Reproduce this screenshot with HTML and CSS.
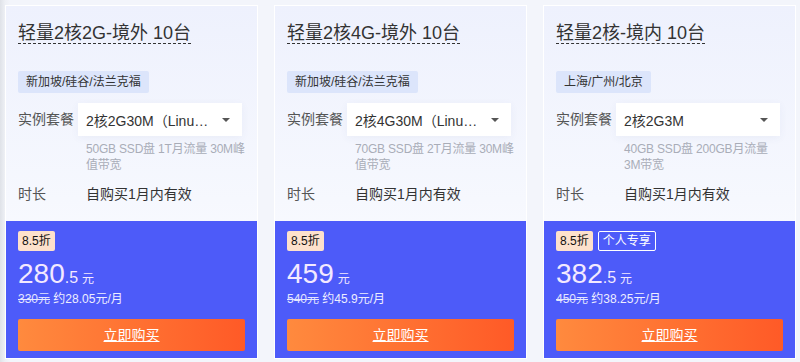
FILE: index.html
```html
<!DOCTYPE html>
<html lang="zh-CN">
<head>
<meta charset="utf-8">
<link rel="stylesheet" href="styles.css">
</head>
<body>
<div class="page">
  <div class="card">
    <div class="top">
      <h3 class="title"><span>轻量2核2G-境外 10台</span></h3>
      <div class="tags"><span class="tag">新加坡/硅谷/法兰克福</span></div>
      <div class="row">
        <span class="label">实例套餐</span>
        <div class="field">
          <div class="select"><span class="val">2核2G30M（Linux）</span><i class="arrow"></i></div>
          <p class="desc">50GB SSD盘 1T月流量 30M峰<br>值带宽</p>
        </div>
      </div>
      <div class="row dur">
        <span class="label">时长</span>
        <span class="value">自购买1月内有效</span>
      </div>
    </div>
    <div class="bottom">
      <div class="badges"><span class="disc">8.5折</span></div>
      <div class="price"><span class="int">280</span><span class="dec">.5</span><span class="unit">元</span></div>
      <div class="orig"><s>330元</s> 约28.05元/月</div>
      <a class="buy" href="#">立即购买</a>
    </div>
  </div>

  <div class="card">
    <div class="top">
      <h3 class="title"><span>轻量2核4G-境外 10台</span></h3>
      <div class="tags"><span class="tag">新加坡/硅谷/法兰克福</span></div>
      <div class="row">
        <span class="label">实例套餐</span>
        <div class="field">
          <div class="select"><span class="val">2核4G30M（Linux）</span><i class="arrow"></i></div>
          <p class="desc">70GB SSD盘 2T月流量 30M峰<br>值带宽</p>
        </div>
      </div>
      <div class="row dur">
        <span class="label">时长</span>
        <span class="value">自购买1月内有效</span>
      </div>
    </div>
    <div class="bottom">
      <div class="badges"><span class="disc">8.5折</span></div>
      <div class="price"><span class="int">459</span><span class="unit">元</span></div>
      <div class="orig"><s>540元</s> 约45.9元/月</div>
      <a class="buy" href="#">立即购买</a>
    </div>
  </div>

  <div class="card">
    <div class="top">
      <h3 class="title"><span>轻量2核-境内 10台</span></h3>
      <div class="tags"><span class="tag">上海/广州/北京</span></div>
      <div class="row">
        <span class="label">实例套餐</span>
        <div class="field">
          <div class="select"><span class="val">2核2G3M</span><i class="arrow"></i></div>
          <p class="desc">40GB SSD盘 200GB月流量<br>3M带宽</p>
        </div>
      </div>
      <div class="row dur">
        <span class="label">时长</span>
        <span class="value">自购买1月内有效</span>
      </div>
    </div>
    <div class="bottom">
      <div class="badges"><span class="disc">8.5折</span><span class="excl">个人专享</span></div>
      <div class="price"><span class="int">382</span><span class="dec">.5</span><span class="unit">元</span></div>
      <div class="orig"><s>450元</s> 约38.25元/月</div>
      <a class="buy" href="#">立即购买</a>
    </div>
  </div>
</div>
</body>
</html>
```

FILE: styles.css
```css
* { box-sizing: border-box; }
html, body { margin: 0; padding: 0; }
body {
  width: 800px;
  height: 362px;
  overflow: hidden;
  background: linear-gradient(90deg, #dfe2e8 0, #eef0f5 5px, #f3f5fb 10px);
  font-family: "Liberation Sans", "Noto Sans CJK SC", sans-serif;
  color: #333;
}
.page {
  display: grid;
  grid-template-columns: repeat(3, 253px);
  column-gap: 16px;
  padding: 5px 0 0 5px;
}
.card {
  display: flex;
  flex-direction: column;
  height: 354px;
  border: 1px solid #fff;
  background: linear-gradient(180deg, #eef1fd 0%, #f6f8fe 55%, #ffffff 100%);
}
.top {
  flex: 0 0 215px;
  padding: 15px 12px 0 12px;
}
.title {
  margin: 0;
  font-size: 18px;
  font-weight: normal;
  line-height: 24px;
  height: 24px;
  color: #333;
}
.title span {
  border-bottom: 1px dashed #333;
}
.tags {
  margin-top: 26px;
  display: flex;
}
.tag {
  background: #dce5fb;
  font-size: 12px;
  line-height: 22px;
  height: 22px;
  padding: 0 8px;
  border-radius: 2px;
  color: #333;
}
.row {
  display: flex;
  align-items: flex-start;
  margin-top: 10px;
}
.label {
  width: 60px;
  flex: 0 0 60px;
  font-size: 14px;
  color: #555;
  line-height: 33px;
  height: 33px;
}
.field {
  width: 164px;
}
.select {
  position: relative;
  height: 33px;
  background: #fff;
  box-shadow: 0 2px 8px rgba(60, 80, 160, 0.06);
  padding: 0 28px 0 8px;
  display: flex;
  align-items: center;
}
.val {
  font-size: 14px;
  color: #333;
  white-space: nowrap;
  overflow: hidden;
  text-overflow: ellipsis;
}
.arrow {
  position: absolute;
  right: 12px;
  top: 15px;
  width: 0;
  height: 0;
  border-left: 4px solid transparent;
  border-right: 4px solid transparent;
  border-top: 4px solid #555;
}
.desc {
  margin: 5px -20px 0 0;
  padding: 0 0 0 8px;
  font-size: 12px;
  line-height: 16px;
  letter-spacing: -0.2px;
  white-space: nowrap;
  color: #a9adb8;
}
.row.dur {
  margin-top: 9px;
}
.row.dur .label { line-height: 24px; height: 24px; }
.value {
  font-size: 14px;
  line-height: 24px;
  color: #333;
  padding-left: 8px;
}
.bottom {
  flex: 1;
  background: #4d5bf9;
  padding: 10px 12px 0 12px;
}
.badges {
  display: flex;
  gap: 5px;
}
.disc {
  background: #fde1cc;
  color: #111;
  font-size: 12px;
  line-height: 20px;
  height: 20px;
  padding: 0 4px;
  border-radius: 2px;
}
.excl {
  border: 1px solid #fff;
  color: #fff;
  font-size: 12px;
  line-height: 18px;
  height: 20px;
  padding: 0 4px;
  border-radius: 2px;
}
.price {
  margin-top: 6px;
  color: #f3e9ff;
  line-height: 34px;
  height: 34px;
  white-space: nowrap;
}
.int {
  font-size: 28px;
}
.dec {
  font-size: 16px;
}
.unit {
  font-size: 12px;
  margin-left: 4px;
}
.orig {
  font-size: 12px;
  line-height: 16px;
  color: #eef;
}
.orig s { color: #e4e6ff; }
.buy {
  display: block;
  margin-top: 12px;
  height: 32px;
  line-height: 32px;
  text-align: center;
  font-size: 14px;
  color: #fff;
  text-decoration: underline;
  background: linear-gradient(90deg, #ff8a3e 0%, #ff5a27 100%);
  border-radius: 2px;
}
```
